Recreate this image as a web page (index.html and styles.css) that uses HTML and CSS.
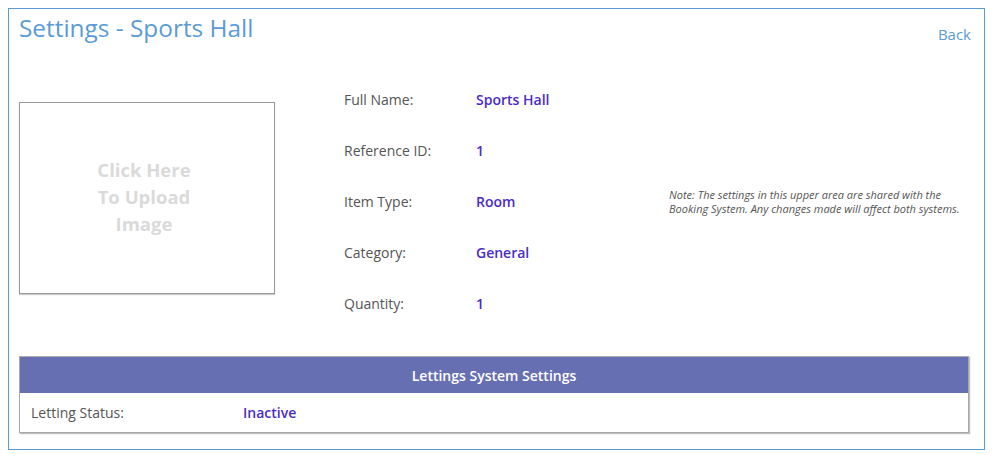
FILE: index.html
```html
<!DOCTYPE html>
<html lang="en">
<head>
    <meta charset="UTF-8">
    <title>Settings - Sports Hall</title>
    <link rel="stylesheet" href="styles.css">
</head>
<body>
<div class="panel">
    <div class="panel-head">
        <h1>Settings - Sports Hall</h1>
        <a href="#" class="back-link">Back</a>
    </div>

    <!-- Upper area, shared with Booking System -->
    <div class="upper">
        <div class="upload-box">Click Here<br>To Upload<br>Image</div>
        <div class="details">
            <div class="row"><span class="label">Full Name:</span><span class="value">Sports Hall</span></div>
            <div class="row"><span class="label">Reference ID:</span><span class="value">1</span></div>
            <div class="row"><span class="label">Item Type:</span><span class="value">Room</span></div>
            <div class="row"><span class="label">Category:</span><span class="value">General</span></div>
            <div class="row"><span class="label">Quantity:</span><span class="value">1</span></div>
        </div>
        <p class="note">Note: The settings in this upper area are shared with the Booking System. Any changes made will affect both systems.</p>
    </div>

    <!-- Lettings -->
    <div class="lettings">
        <div class="lettings-head">Lettings System Settings</div>
        <div class="lettings-row">
            <span class="label">Letting Status:</span>
            <span class="value">Inactive</span>
        </div>
    </div>
</div>
</body>
</html>
```

FILE: styles.css
```css
body { margin: 8px; font-family: "Open Sans", "Liberation Sans", sans-serif; background: #fff; color: #555; }
.panel { width: 977px; box-sizing: border-box; border: 1px solid #5b9bd5; padding: 2px 15px 16px 10px; }
.panel-head { display: flex; justify-content: space-between; align-items: flex-start; }
h1 { margin: 0; font-size: 24.4px; font-weight: 400; color: #5b9bd5; line-height: 33px; }
.back-link { font-size: 15px; color: #5b9bd5; text-decoration: none; margin-top: 13px; margin-right: -2px; }
.upper { display: flex; margin-top: 30px; height: 255px; }
.upload-box { width: 256px; height: 192px; box-sizing: border-box; border: 1px solid #999; box-shadow: 0 1px 1px #ccc; margin-top: 28px;
    display: flex; align-items: center; justify-content: center; text-align: center; font-size: 18.5px; font-weight: 700; line-height: 27px; color: #dadada; padding: 0 6px 4px 0; }
.details { margin-left: 69px; width: 325px; }
.row { height: 51px; display: flex; align-items: center; font-size: 14px; }
.label { width: 132px; color: #555; }
.value { color: #4a2bc8; font-weight: 600; }
.note { margin: 0; align-self: center; font-size: 11px; font-style: italic; line-height: 14px; color: #555; width: 300px; }
.lettings { margin-top: 27px; border: 1px solid #aaa; box-shadow: 1px 1px 1px #bbb; }
.lettings-head { background: #676fb3; color: #fff; font-weight: 600; font-size: 14px; text-align: center; height: 36px; line-height: 38px; }
.lettings-row { height: 39px; display: flex; align-items: center; font-size: 14px; padding-left: 11px; }
.lettings-row .label { width: 212px; }
```
